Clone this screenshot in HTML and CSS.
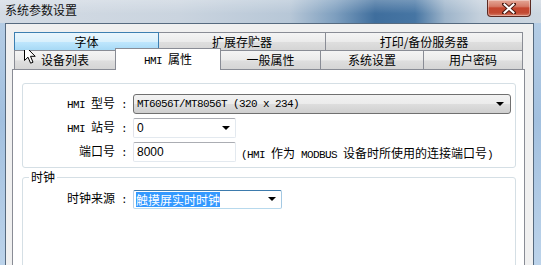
FILE: index.html
```html
<!DOCTYPE html>
<html lang="zh">
<head>
  <meta charset="UTF-8">
  <title>系统参数设置</title>
  <link rel="stylesheet" href="styles.css">
</head>
<body>
  <div class="window">
    <div class="titlebar">
      <span class="title">系统参数设置</span>
      <div class="close">
        <svg width="14" height="11" viewBox="0 0 14 11">
          <path d="M2 1 L12 10 M12 1 L2 10" stroke="#4a1a12" stroke-width="4" stroke-linecap="square"/>
          <path d="M2.5 1.5 L11.5 9.5 M11.5 1.5 L2.5 9.5" stroke="#fff" stroke-width="2" stroke-linecap="square"/>
        </svg>
      </div>
    </div>

    <div class="frame">
      <div class="client">
        <!-- 两排标签页 -->
        <div class="tabs">
          <div class="tabrow top">
            <div class="tab hover" style="width:145px">字体</div>
            <div class="tab" style="width:168px">扩展存贮器</div>
            <div class="tab" style="width:198px">打印/备份服务器</div>
          </div>
          <div class="tabrow">
            <div class="tab" style="width:102px">设备列表</div>
            <div class="tab active" style="width:106px"><span class="asc">HMI </span>属性</div>
            <div class="tab" style="width:101px">一般属性</div>
            <div class="tab" style="width:104px">系统设置</div>
            <div class="tab" style="width:100px">用户密码</div>
          </div>
        </div>

        <div class="panel">
          <fieldset class="group first">
            <div class="row">
              <label class="lbl"><span class="asc">HMI </span>型号<span class="asc"> :</span></label>
              <div class="combo ro wide">
                <span class="val asc">MT6056T/MT8056T (320 x 234)</span>
                <span class="arrow"></span>
              </div>
            </div>
            <div class="row">
              <label class="lbl"><span class="asc">HMI </span>站号<span class="asc"> :</span></label>
              <div class="combo short">
                <span class="val num">0</span>
                <span class="arrow"></span>
              </div>
            </div>
            <div class="row">
              <label class="lbl">端口号<span class="asc"> :</span></label>
              <div class="textbox short"><span class="num">8000</span></div>
              <span class="desc"><span class="asc">(HMI </span>作为<span class="asc"> MODBUS </span>设备时所使用的连接端口号<span class="asc">)</span></span>
            </div>
          </fieldset>

          <fieldset class="group clock">
            <legend>时钟</legend>
            <div class="row">
              <label class="lbl">时钟来源<span class="asc"> :</span></label>
              <div class="combo focus mid">
                <span class="val"><span class="sel">触摸屏实时时钟</span></span>
                <span class="arrow"></span>
              </div>
            </div>
          </fieldset>
        </div>
      </div>
    </div>

    <svg class="cursor" width="13" height="20" viewBox="0 0 13 20">
      <path d="M0.5 0.5 L0.5 15.5 L4 12.2 L6.6 18.2 L9 17.2 L6.5 11.3 L11.2 11.3 Z" fill="#fff" stroke="#000" stroke-width="1"/>
    </svg>
  </div>
</body>
</html>
```

FILE: styles.css
```css
* {
  box-sizing: border-box;
}

body {
  margin: 0;
  font-family: "Noto Sans CJK SC", sans-serif;
  font-size: 12px;
  color: #000;
}

.window {
  position: relative;
  width: 541px;
  height: 265px;
  overflow: hidden;
  display: flex;
  flex-direction: column;
  background: linear-gradient(180deg, #b8cfe6 0%, #a2c0df 45%, #bcd3ea 100%);
}

.titlebar {
  height: 23px;
  flex: none;
  display: flex;
  align-items: flex-start;
  justify-content: space-between;
  background:
    linear-gradient(180deg, rgba(255,255,255,0.25), rgba(255,255,255,0) 60%),
    linear-gradient(90deg, #d3dbe4 0, #cad4df 180px, #b7c7d7 290px, #7e9fbf 335px, #3f6e9d 375px, #4675a3 415px, #9db4ca 445px, #c4d0dc 480px, #cdd7e1 541px);
}

.title {
  margin: 2px 0 0 5px;
  line-height: 16px;
  color: #111;
}

.close {
  width: 44px;
  height: 17px;
  margin-right: 10px;
  border: 1px solid #5b2a22;
  border-top: none;
  border-radius: 0 0 4px 4px;
  background: linear-gradient(180deg, #e5a796 0%, #d57a66 40%, #c5452d 50%, #c24a33 80%, #d8806a 100%);
  display: flex;
  align-items: center;
  justify-content: center;
  box-shadow: inset 0 0 0 1px rgba(255,255,255,0.35);
}

.frame {
  flex: 1;
  display: flex;
  padding: 0 7px 0 5px;
}

.client {
  flex: 1;
  display: flex;
  flex-direction: column;
  border: 1px solid #566a7f;
  border-bottom: none;
  background: #f0f0f0;
  padding: 8px 8px 0 6px;
}

/* 标签页 */
.tabs {
  margin-left: 2px;
}

.tabrow {
  display: flex;
}

.tab {
  height: 19px;
  margin-right: -1px;
  border: 1px solid #898c95;
  border-bottom: none;
  background: linear-gradient(180deg, #f4f4f4 0%, #ebebeb 50%, #dedede 55%, #d5d5d5 100%);
  text-align: center;
  line-height: 17px;
  white-space: nowrap;
}

.tabrow.top .tab {
  height: 18px;
  line-height: 17px;
}

.tab.hover {
  border-color: #3c7fb1;
  background: linear-gradient(180deg, #eaf6fd 0%, #d9f0fc 50%, #bee6fd 55%, #a7d9f5 100%);
  position: relative;
  z-index: 1;
}

.tab.active {
  position: relative;
  z-index: 2;
  height: 22px;
  margin-top: -2px;
  margin-bottom: -1px;
  background: #fff;
  line-height: 20px;
}

.panel {
  flex: 1;
  border: 1px solid #898c95;
  border-bottom: none;
  background: #fff;
  padding: 13px 8px 0 9px;
}

/* 分组框 */
.group {
  margin: 0;
  padding: 0;
  border: 1px solid #d5dfe5;
  border-radius: 3px;
  min-width: 0;
}

.group.first {
  padding: 10px 0 5px 0;
  display: flex;
  flex-direction: column;
  gap: 4px;
}

.group.clock {
  margin-top: 2px;
  height: 120px;
  padding-top: 5px;
}

.group legend {
  margin-left: 6px;
  padding: 0 2px;
  line-height: 14px;
}

.row {
  display: flex;
  align-items: center;
  height: 20px;
}

.lbl {
  width: 110px;
  padding-right: 6px;
  text-align: right;
  line-height: 20px;
  white-space: pre;
}

.asc {
  font-family: "Liberation Mono", monospace;
  font-size: 11px;
  letter-spacing: -0.6px;
  white-space: pre;
}

.num {
  font-family: "Liberation Sans", sans-serif;
  font-size: 12px;
}

/* 下拉框与输入框 */
.combo,
.textbox {
  height: 20px;
  display: flex;
  align-items: center;
  padding-left: 3px;
  background: #fff;
  border: 1px solid;
  border-color: #abadb3 #e3e9ef #e3e9ef #e2e3ea;
  border-radius: 2px;
}

.combo .val {
  flex: 1;
  white-space: nowrap;
}

.combo.ro {
  border-color: #707070;
  border-radius: 3px;
  background: linear-gradient(180deg, #f2f2f2 0%, #ebebeb 50%, #dddddd 52%, #cfcfcf 100%);
}

.combo.focus {
  height: 19px;
  padding-left: 2px;
  border-color: #3d7bad #a4c9e3 #b7d9ed #b5cfe7;
}

.wide {
  width: 378px;
}

.short {
  width: 103px;
}

.mid {
  width: 149px;
}

.arrow {
  width: 0;
  height: 0;
  margin-right: 5px;
  border-left: 4px solid transparent;
  border-right: 4px solid transparent;
  border-top: 4px solid #000;
}

.wide .arrow {
  margin-right: 6px;
}

.sel {
  background: #3399ff;
  color: #fff;
  line-height: 15px;
  display: inline-block;
}

.desc {
  margin-left: 5px;
  white-space: nowrap;
}

.cursor {
  position: absolute;
  left: 24px;
  top: 45px;
}
```
